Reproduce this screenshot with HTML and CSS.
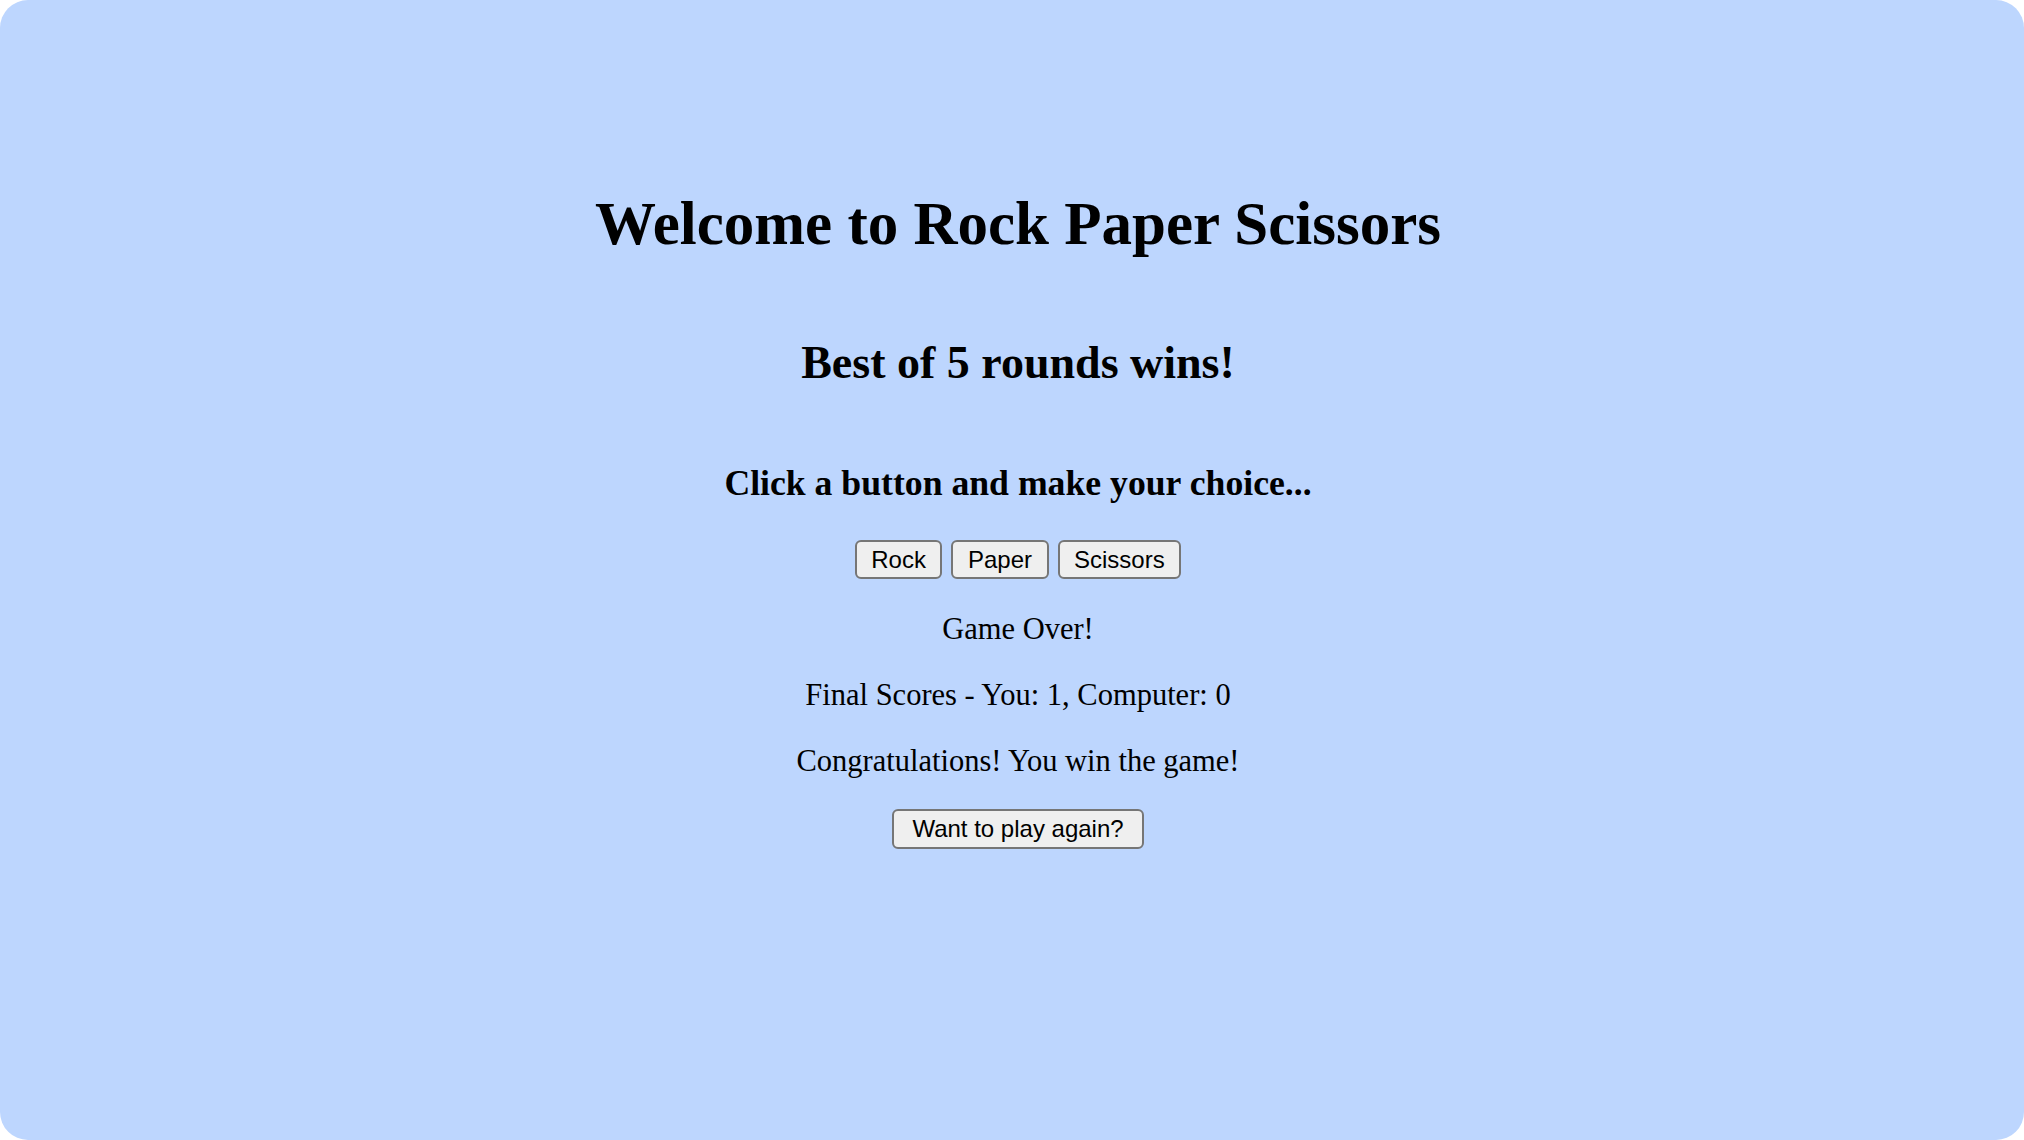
FILE: index.html
```html
<!DOCTYPE html>
<html lang="en">
<head>
<meta charset="utf-8">
<title>Rock Paper Scissors</title>
<link rel="stylesheet" href="styles.css">
</head>
<body>
<main class="frame">
  <div class="game">
    <h1 class="title">Welcome to Rock Paper Scissors</h1>
    <h2 class="subtitle">Best of 5 rounds wins!</h2>
    <h3 class="prompt">Click a button and make your choice...</h3>
    <div class="choices">
      <button class="btn choice">Rock</button>
      <button class="btn choice">Paper</button>
      <button class="btn choice">Scissors</button>
    </div>
    <div class="results">
      <p class="msg">Game Over!</p>
      <p class="msg">Final Scores - You: 1, Computer: 0</p>
      <p class="msg">Congratulations! You win the game!</p>
    </div>
    <button class="btn again">Want to play again?</button>
  </div>
</main>
</body>
</html>
```

FILE: styles.css
```css
html, body {
  margin: 0;
  padding: 0;
  background: #ffffff;
}

.frame {
  height: 1140px;
  background: #bdd6fe;
  border-radius: 28px;
  overflow: hidden;
}

.game {
  display: flex;
  flex-direction: column;
  align-items: center;
  padding: 189px 0 0 12px;
  font-family: "Liberation Serif", "Times New Roman", serif;
  color: #000;
  text-align: center;
}

.title {
  margin: 0;
  font-size: 61px;
  line-height: 70px;
  font-weight: bold;
}

.subtitle {
  margin: 77px 0 0;
  font-size: 46px;
  line-height: 54px;
  font-weight: bold;
}

.prompt {
  margin: 72px 0 0;
  font-size: 35.7px;
  line-height: 42px;
  font-weight: bold;
}

.choices {
  display: flex;
  gap: 9px;
  margin-top: 36px;
}

.btn {
  font-family: "Liberation Sans", Arial, sans-serif;
  font-size: 24px;
  color: #000;
  background: #efefef;
  border: 2px solid #767676;
  border-radius: 6px;
  box-sizing: border-box;
  margin: 0;
  line-height: 1;
}

.choice {
  height: 39px;
  padding: 0 14.5px;
}

.results {
  display: flex;
  flex-direction: column;
  gap: 30px;
  margin-top: 32px;
}

.msg {
  margin: 0;
  font-size: 30.5px;
  line-height: 36px;
}

.again {
  margin-top: 30px;
  height: 40px;
  padding: 0 18px;
}
```
